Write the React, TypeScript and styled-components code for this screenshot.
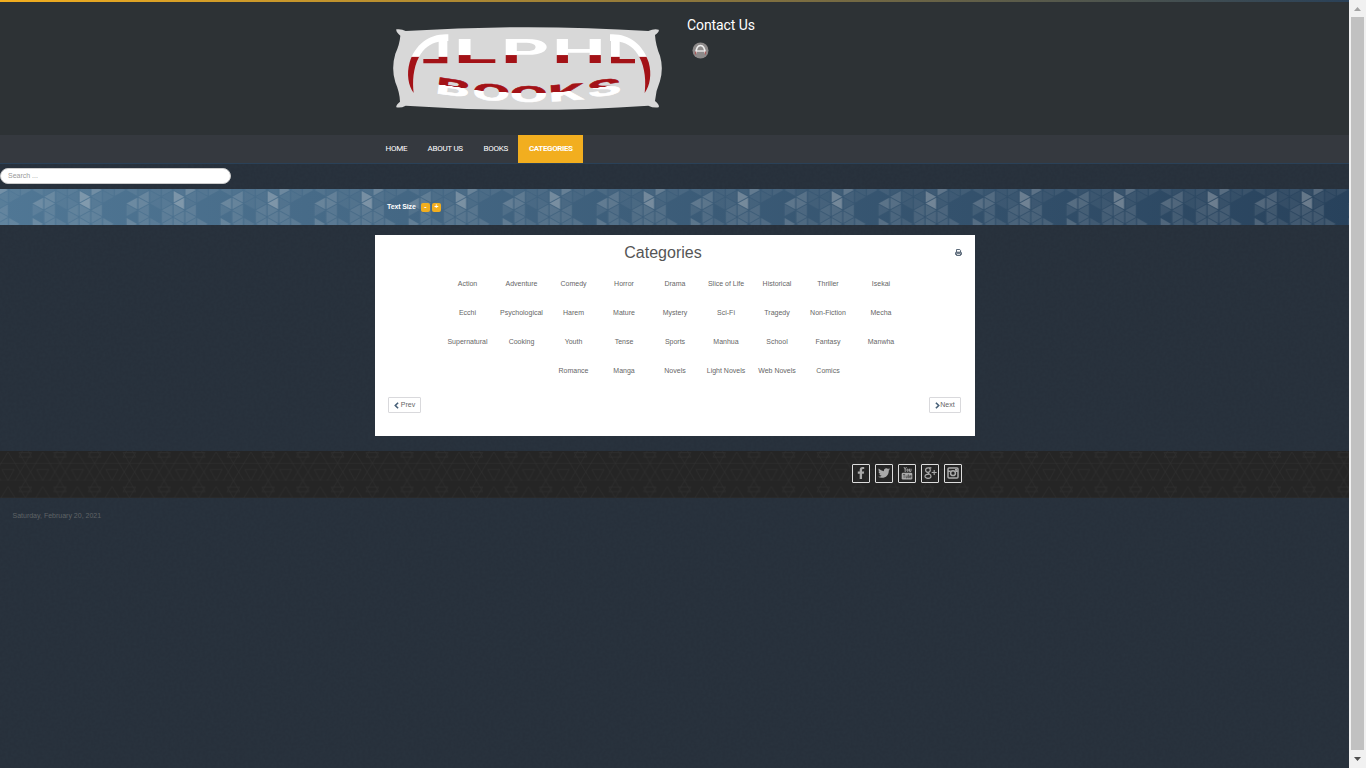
import React from "react";
import styled, { createGlobalStyle } from "styled-components";
import { FaFacebookF, FaTwitter } from "react-icons/fa";

const GlobalStyle = createGlobalStyle`
  * { box-sizing: border-box; }
  body { margin: 0; background: #27303b; overflow: hidden; }
`;

const Window = styled.div`
  display: flex;
  height: 768px;
  font: 7px/10px "Liberation Sans", Arial, sans-serif;
  color: #666;
`;

const Page = styled.div`
  flex: 1;
  position: relative;
  isolation: isolate;
  background: #27303b;
`;

const Grain = styled.svg`
  position: absolute;
  inset: 0;
  z-index: -1;
  width: 100%;
  height: 100%;
`;

const Stripe = styled.div`
  height: 2px;
  background: linear-gradient(90deg, #f2ae1f, #2a4158);
`;

const Container = styled.div`
  width: 600px;
  margin: 0 auto 0 375px;
`;

const Header = styled.header`
  height: 133px;
  background: #2d3235;
`;

const HeaderRow = styled(Container)`
  display: flex;
  padding: 13px 0 0 10px;
`;

const Contact = styled.div`
  padding: 0 0 0 12px;
`;

const ContactTitle = styled.h3`
  margin: 0 0 7px;
  font: 400 14px/20px Roboto, sans-serif;
  letter-spacing: -0.08px;
  color: #fff;
`;

const Badge = styled.svg`
  display: block;
  margin-left: 5px;
`;

const NavBar = styled.nav`
  height: 29px;
  background: #35393f;
  border-bottom: 1px solid #2a4158;
`;

const NavList = styled(Container)`
  display: flex;
  height: 28px;
`;

const NavItem = styled.a<{ $active?: boolean; $width: number }>`
  width: ${(p) => p.$width}px;
  padding-left: ${(p) => (p.$active ? 11 : 10.5)}px;
  font: ${(p) => (p.$active ? 700 : 400)} 8px/27px Roboto, sans-serif;
  letter-spacing: ${(p) => (p.$active ? "-0.38px" : "-0.26px")};
  white-space: nowrap;
  color: #fff;
  background: ${(p) => (p.$active ? "#f2ae1f" : "transparent")};
`;

const SearchRow = styled.div`
  height: 25px;
  padding-top: 4px;
`;

const SearchInput = styled.input`
  display: block;
  width: 231px;
  height: 16px;
  padding: 0 7px 1px;
  border: 1px solid #ccc;
  border-radius: 8px;
  font: 7px "Liberation Sans", Arial, sans-serif;
  background: #fff;
  &::placeholder { color: #999; }
`;

const Band = styled.section`
  position: relative;
  isolation: isolate;
  height: 36px;
  background: linear-gradient(90deg, #507795, #28425c);
`;

const Backdrop = styled.svg`
  position: absolute;
  inset: 0;
  z-index: -1;
  width: 100%;
  height: 100%;
`;

const TextSize = styled(Container)`
  display: flex;
  align-items: center;
  height: 36px;
  padding-left: 12px;
  font: 700 7px/10px "Liberation Sans", Arial, sans-serif;
  color: #fff;
`;

const SizeLabel = styled.span`
  width: 34px;
  letter-spacing: -0.12px;
`;

const SizeButton = styled.span`
  width: 9px;
  height: 9px;
  margin: 1px 2px 0 0;
  border-radius: 2px;
  line-height: 8px;
  text-align: center;
  background: #f2ae1f;
`;

const Card = styled(Container)`
  height: 201px;
  margin-top: 10px;
  background: #fff;
`;

const CardHead = styled.div`
  display: flex;
  align-items: center;
  height: 34px;
  padding: 1px 13px 0 13px;
`;

const Title = styled.h2`
  flex: 1;
  margin: 0;
  padding-right: 17px;
  font: 400 16px/20px "Liberation Sans", Arial, sans-serif;
  text-align: center;
  color: #555;
`;

const Grid = styled.div`
  display: grid;
  grid-template-columns: 52px 56px 48px 53px 49px 53px 49px 53px 53px;
  grid-auto-rows: 29px;
  padding-left: 66.5px;
`;

const Cell = styled.span`
  display: flex;
  align-items: center;
  justify-content: center;
  white-space: nowrap;
`;

const Pager = styled.div`
  display: flex;
  justify-content: space-between;
  padding: 12px 14px 0 13px;
`;

const PagerButton = styled.span<{ $width: number }>`
  display: flex;
  align-items: center;
  justify-content: center;
  gap: ${(p) => (p.$width > 32 ? 2 : 0)}px;
  width: ${(p) => p.$width}px;
  height: 16px;
  border: 1px solid #d9d9dc;
  border-radius: 1px;
`;

const Footer = styled.footer`
  position: relative;
  isolation: isolate;
  height: 47px;
  margin-top: 15px;
  background: #252525;
`;

const Socials = styled(Container)`
  display: flex;
  justify-content: flex-end;
  gap: 5px;
  padding: 13px 13px 0 0;
`;

const Social = styled.span`
  display: flex;
  align-items: center;
  justify-content: center;
  width: 18px;
  height: 19px;
  padding-bottom: 1px;
  border: 1px solid #ddd;
  border-radius: 1px;
  color: #aaa;
`;

const DateLine = styled.div`
  padding: 13px 12.5px;
  color: #5f6366;
`;

const ScrollBar = styled.div`
  display: flex;
  flex-direction: column;
  align-items: center;
  justify-content: space-between;
  width: 17px;
  background: #f1f1f1;
`;

const ScrollThumb = styled.div`
  flex: 1;
  width: 13px;
  background: #c1c1c1;
`;

const ScrollArrow = styled.svg<{ $height: number }>`
  display: block;
  width: 17px;
  height: ${(p) => p.$height}px;
`;

const NAV = [
  { label: "HOME", width: 42 },
  { label: "ABOUT US", width: 56 },
  { label: "BOOKS", width: 45 },
  { label: "CATEGORIES", width: 65, active: true },
];

const CATEGORIES = [
  "Action", "Adventure", "Comedy", "Horror", "Drama", "Slice of Life", "Historical", "Thriller", "Isekai",
  "Ecchi", "Psychological", "Harem", "Mature", "Mystery", "Sci-Fi", "Tragedy", "Non-Fiction", "Mecha",
  "Supernatural", "Cooking", "Youth", "Tense", "Sports", "Manhua", "School", "Fantasy", "Manwha",
  "", "", "Romance", "Manga", "Novels", "Light Novels", "Web Novels", "Comics", "",
];

// Brightness of each triangle in one repeat of the mosaic, column by column.
const MOSAIC = [
  [0.25, 0.08, 0.07, 0.14, 0.14, 0.12],
  [0.07, 0.06, 0, 0, 0, 0.14],
  [0.08, 0, 0, 0, 0, 0],
  [0.08, 0, 0.22, 0.09, 0, 0.2],
  [0.04, 0.19, 0.2, 0.12, 0.13, 0.13],
  [0.07, 0.07, 0.06, 0, 0, 0.1],
  [0.08, 0.05, 0.08, 0.14, 0.12, 0.14],
  [0.06, 0.33, 0.36, 0.16, 0.14, 0.16],
];
const COL = 11.75;
const HALF = 6.78;

function Mosaic() {
  return (
    <Backdrop>
      <defs>
        <pattern id="mosaic" x="-3.25" width="94" height="36" patternUnits="userSpaceOnUse">
          {MOSAIC.flatMap((column, c) =>
            column.map((opacity, k) => {
              const y = 1 + k * HALF;
              const left = c * COL + 0.6;
              const right = left + COL - 1.2;
              const h = HALF - 1;
              const points =
                c % 2 === k % 2
                  ? `${left},${y - h} ${left},${y + h} ${right},${y}`
                  : `${right},${y - h} ${right},${y + h} ${left},${y}`;
              return <polygon key={`${c}-${k}`} points={points} fill="#ddd" opacity={opacity} />;
            })
          )}
        </pattern>
      </defs>
      <rect width="100%" height="100%" fill="url(#mosaic)" />
    </Backdrop>
  );
}

function FooterLines() {
  return (
    <Backdrop>
      <defs>
        <pattern id="lines" x="8" y="-5" width="34.7" height="34.6" patternUnits="userSpaceOnUse">
          <path
            d="M0 17.3H34.7M0 34.6H34.7M7 34.6L17.3 17.3L27.7 34.6M-7 17.3L0 6L7 17.3M27.7 17.3L34.7 6L41.7 17.3M7 17.3L17.3 34.6M27.7 17.3L17.3 34.6M11 6.5H23.5L17.3 17.3ZM17.3 0L23.5 11H11ZM-6 23.5H6L0 34.6ZM28.7 23.5H40.7L34.7 34.6Z"
            fill="none"
            stroke="#303030"
            strokeWidth="0.6"
          />
        </pattern>
      </defs>
      <rect width="100%" height="100%" fill="url(#lines)" />
    </Backdrop>
  );
}

const TOP_LETTERS = [
  { ch: "L", x: 206, sx: 2.47 },
  { ch: "P", x: 348, sx: 2.33 },
  { ch: "H", x: 501, sx: 2.35 },
];
const BOTTOM_LETTERS = [
  { ch: "B", x: 149, y: 234, r: 8 },
  { ch: "O", x: 261, y: 252, r: 4 },
  { ch: "O", x: 375, y: 260, r: 0 },
  { ch: "K", x: 492, y: 260, r: -4 },
  { ch: "S", x: 611, y: 249, r: -8 },
];

function Logo() {
  return (
    <svg width="290" height="105" viewBox="0 0 870 315" aria-label="Alpha Books">
      <defs>
        <linearGradient id="top" gradientUnits="userSpaceOnUse" x1="0" x2="0" y1="-69" y2="0">
          <stop offset="0.65" stopColor="#fff" />
          <stop offset="0.66" stopColor="#a31217" />
        </linearGradient>
        <linearGradient id="bottom" gradientUnits="userSpaceOnUse" x1="0" x2="0" y1="-49" y2="0">
          <stop offset="0.44" stopColor="#a31217" />
          <stop offset="0.46" stopColor="#fff" />
        </linearGradient>
        <linearGradient id="swoosh" gradientUnits="userSpaceOnUse" x1="0" x2="0" y1="57" y2="234">
          <stop offset="0.38" stopColor="#fff" />
          <stop offset="0.39" stopColor="#a31217" />
        </linearGradient>
        <g id="side">
          <path d="M190 58C135 55 90 88 74 142C64 178 70 212 86 234C82 200 84 160 102 126C115 100 137 84 161 80V132H115V145H187V78H190Z" />
        </g>
      </defs>
      <path
        d="M34 43Q50 41 62 48Q430 25 790 48Q806 41 821 44Q824 50 810 60Q812 92 825 122Q836 160 825 198Q812 228 810 258Q825 270 821 277Q806 280 790 272Q430 297 62 272Q48 280 34 277Q32 271 45 260Q44 232 31 202Q18 160 31 116Q44 88 46 62Q32 50 34 43Z"
        fill="#d8d8d8"
      />
      <use href="#side" fill="url(#swoosh)" />
      <use href="#side" fill="url(#swoosh)" transform="matrix(-1 0 0 1 865 0)" />
      {TOP_LETTERS.map((l) => (
        <text
          key={l.ch}
          transform={`translate(${l.x} 145) scale(${l.sx} 1)`}
          fontFamily="Roboto"
          fontWeight="700"
          fontSize="97"
          fill="url(#top)"
        >
          {l.ch}
        </text>
      ))}
      {BOTTOM_LETTERS.map((l) => (
        <text
          key={l.x}
          transform={`translate(${l.x} ${l.y}) rotate(${l.r}) scale(2.4 1)`}
          fontFamily="Roboto"
          fontWeight="700"
          fontSize="68"
          fill="url(#bottom)"
          stroke="url(#bottom)"
          strokeWidth="1.5"
        >
          {l.ch}
        </text>
      ))}
    </svg>
  );
}

function ContactBadge() {
  return (
    <Badge width="17" height="17" viewBox="0 0 17 17">
      <circle cx="8.5" cy="8.5" r="8" fill="#8d8a8a" />
      <path d="M3.8 11.5C4.2 6 6.5 3.5 8.5 3.5S12.8 6 13.2 11.5" fill="none" stroke="#eee" strokeWidth="1.7" />
      <path d="M5 9H12" stroke="#eee" strokeWidth="1.3" />
      <path d="M3.6 9.5V12.5M13.4 9.5V12.5" stroke="#a45b5b" strokeWidth="1.4" />
    </Badge>
  );
}

function Chevron({ flip }: { flip?: boolean }) {
  return (
    <svg width="5" height="7" viewBox="0 0 5 7" fill="none" stroke="#476078" strokeWidth="1.6">
      <path d={flip ? "M0.9 0.7L3.7 3.5L0.9 6.3" : "M4.1 0.7L1.3 3.5L4.1 6.3"} />
    </svg>
  );
}

function PrintIcon() {
  return (
    <svg width="7" height="7" viewBox="0 0 14 14" fill="none" stroke="#4b5a6b" strokeWidth="1.8">
      <path d="M3 6V1H9.5L11 2.5V6" />
      <path d="M3 11H1V7.5Q1 6.3 2.2 6.3H11.8Q13 6.3 13 7.5V11H11" />
      <path d="M2 7.6H12" />
      <path d="M3 9.5H11V13H3Z" />
    </svg>
  );
}

function YouTubeIcon() {
  return (
    <svg width="12" height="13" viewBox="0 0 12 13">
      <path d="M3 0L4.2 2.6V5M5.4 0L4.2 2.6M6 2.2V4.2H7.2V2.2H6M8.5 1.7V4.4H10V1.7" fill="none" stroke="#aaa" strokeWidth="0.9" />
      <rect x="0.7" y="5.8" width="10.6" height="6.7" rx="1.3" fill="#aaa" />
      <path d="M2 7.5H4.2M3.1 7.5V11M5 8.5V10.8H6.2V8.5M7.3 7.2V10.8H8.3V8.8H7.3M9.2 9.6H10.2V8.6H9.2V10.8H10.2" fill="none" stroke="#333" strokeWidth="0.6" />
    </svg>
  );
}

function GooglePlusIcon() {
  return (
    <svg width="13" height="12" viewBox="0 0 13 12" fill="none" stroke="#aaa">
      <path d="M7.4 0.8H4.2C2.5 0.8 1.6 1.8 1.6 3.1S2.6 5.3 4 5.3S6.3 4.3 6.3 3.1S5.6 1 4.7 0.8" strokeWidth="1.2" />
      <path d="M4.2 5.3C3.6 6 4.6 6.5 5.3 7C6.5 7.7 7 8.3 7 9.2C7 10.5 5.6 11.3 4 11.3S1 10.6 1 9.4S2.4 7.3 5 7.2" strokeWidth="1.2" />
      <path d="M10.2 3V8M7.7 5.5H12.7" strokeWidth="1.1" />
    </svg>
  );
}

function InstagramIcon() {
  return (
    <svg width="12" height="12" viewBox="0 0 12 12" fill="none" stroke="#aaa">
      <rect x="1" y="1" width="10" height="10" rx="1" strokeWidth="1.5" />
      <path d="M1 4.3H3.6M8.4 4.3H11" strokeWidth="1.5" />
      <circle cx="6" cy="6.2" r="2.4" strokeWidth="1.5" />
      <path d="M8 2.9H10" strokeWidth="1.6" />
    </svg>
  );
}

export default function App() {
  return (
    <Window>
      <GlobalStyle />
      <Page>
        <Grain>
          <filter id="grain">
            <feTurbulence type="fractalNoise" baseFrequency="0.35" numOctaves="2" seed="4" />
            <feColorMatrix values="0 0 0 0 0.2  0 0 0 0 0.35  0 0 0 0 0.4  0.35 0 0 0 -0.08" />
          </filter>
          <rect width="100%" height="100%" filter="url(#grain)" opacity="0.12" />
        </Grain>
        <Stripe />
        <Header>
          <HeaderRow>
            <Logo />
            <Contact>
              <ContactTitle>Contact Us</ContactTitle>
              <ContactBadge />
            </Contact>
          </HeaderRow>
        </Header>
        <NavBar>
          <NavList>
            {NAV.map((n) => (
              <NavItem key={n.label} $width={n.width} $active={n.active}>{n.label}</NavItem>
            ))}
          </NavList>
        </NavBar>
        <SearchRow>
          <SearchInput placeholder="Search ..." />
        </SearchRow>
        <Band>
          <Mosaic />
          <TextSize>
            <SizeLabel>Text Size</SizeLabel>
            <SizeButton>-</SizeButton>
            <SizeButton>+</SizeButton>
          </TextSize>
        </Band>
        <Card>
          <CardHead>
            <Title>Categories</Title>
            <PrintIcon />
          </CardHead>
          <Grid>
            {CATEGORIES.map((c, i) => (
              <Cell key={i}>{c}</Cell>
            ))}
          </Grid>
          <Pager>
            <PagerButton $width={33}><Chevron />Prev</PagerButton>
            <PagerButton $width={32}><Chevron flip />Next</PagerButton>
          </Pager>
        </Card>
        <Footer>
          <FooterLines />
          <Socials>
            <Social><FaFacebookF size={12} /></Social>
            <Social><FaTwitter size={12} /></Social>
            <Social><YouTubeIcon /></Social>
            <Social><GooglePlusIcon /></Social>
            <Social><InstagramIcon /></Social>
          </Socials>
        </Footer>
        <DateLine>Saturday, February 20, 2021</DateLine>
      </Page>
      <ScrollBar>
        <ScrollArrow $height={17} viewBox="0 0 17 17">
          <path d="M5 11H12L8.5 7Z" fill="#a3a3a3" />
        </ScrollArrow>
        <ScrollThumb />
        <ScrollArrow $height={18} viewBox="0 0 17 18">
          <path d="M5 7H12L8.5 11Z" fill="#505050" />
        </ScrollArrow>
      </ScrollBar>
    </Window>
  );
}
